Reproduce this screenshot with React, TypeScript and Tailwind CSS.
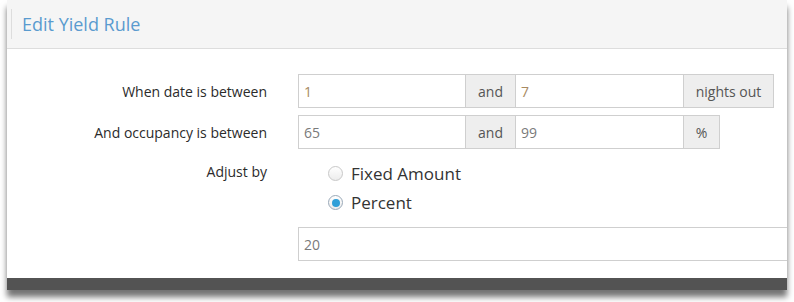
import { ReactNode } from 'react';

const font = { fontFamily: '"Open Sans", "Liberation Sans", sans-serif' };

function Field({ value, tone = 'gray', className = '' }: { value: string; tone?: 'gray' | 'tan'; className?: string }) {
  return (
    <div
      className={`h-[34px] border border-[#cfcfcf] bg-white flex items-center pl-[5px] text-[14px] ${
        tone === 'tan' ? 'text-[#a88a62]' : 'text-[#7a7a7a]'
      } ${className}`}
    >
      {value}
    </div>
  );
}

function Addon({ children, className = '' }: { children: ReactNode; className?: string }) {
  return (
    <div
      className={`h-[34px] border border-[#cfcfcf] bg-[#eeeeee] flex items-center justify-center text-[14px] text-[#555] ${className}`}
    >
      {children}
    </div>
  );
}

function Label({ children }: { children: ReactNode }) {
  return <div className="w-[260px] shrink-0 text-right text-[14px] text-[#2b2b2b]">{children}</div>;
}

function Radio({ checked, label }: { checked?: boolean; label: string }) {
  return (
    <div className="flex items-center h-[29px]">
      <span
        className={`w-[15px] h-[15px] rounded-full border flex items-center justify-center bg-gradient-to-b from-white to-[#ececec] ${
          checked ? 'border-[#9aa9b8]' : 'border-[#c8c8c8]'
        }`}
      >
        {checked && <span className="w-[8px] h-[8px] rounded-full bg-[#2f9fd8]" />}
      </span>
      <span className="ml-[8px] text-[17px] text-[#333]">{label}</span>
    </div>
  );
}

export default function App() {
  return (
    <div className="w-[794px] h-[302px] bg-white overflow-hidden" style={font}>
      <div className="ml-[7px] w-[780px] shadow-[0_7px_6px_rgba(0,0,0,0.55)]">
        <div className="bg-white overflow-hidden">
          {/* Header */}
          <div className="h-[49px] bg-[#f5f5f5] border-b border-[#dddddd] flex items-center">
            <div className="ml-[4px] w-px h-[30px] bg-[#dddddd]" />
            <h2 className="ml-[10px] text-[18px] text-[#5a9bcf] font-normal">Edit Yield Rule</h2>
          </div>

          {/* Body */}
          <div className="h-[229px] pt-[25px]">
            <div className="flex items-center">
              <Label>When date is between</Label>
              <div className="ml-[31px] flex">
                <Field value="1" tone="tan" className="w-[168px]" />
                <Addon className="w-[51px] -ml-px">and</Addon>
                <Field value="7" tone="tan" className="w-[169px] -ml-px" />
                <Addon className="w-[91px] -ml-px">nights out</Addon>
              </div>
            </div>

            <div className="flex items-center mt-[7px]">
              <Label>And occupancy is between</Label>
              <div className="ml-[31px] flex">
                <Field value="65" className="w-[168px]" />
                <Addon className="w-[51px] -ml-px">and</Addon>
                <Field value="99" className="w-[169px] -ml-px" />
                <Addon className="w-[37px] -ml-px">%</Addon>
              </div>
            </div>

            <div className="flex mt-[11px]">
              <Label>
                <div className="h-[29px] flex items-center justify-end -mt-[3px]">Adjust by</div>
              </Label>
              <div className="ml-[61px] flex flex-col -mt-px">
                <Radio label="Fixed Amount" />
                <Radio checked label="Percent" />
              </div>
            </div>

            <div className="flex mt-[10px]">
              <div className="w-[291px] shrink-0" />
              <Field value="20" className="w-[520px] shrink-0" />
            </div>
          </div>
        </div>
        <div className="h-[12px] bg-[#535353]" />
      </div>
    </div>
  );
}
